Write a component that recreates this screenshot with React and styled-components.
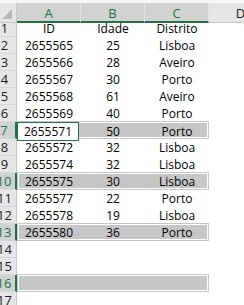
import React from "react";
import styled, { createGlobalStyle } from "styled-components";

const GREEN = "#217346";

const GlobalStyle = createGlobalStyle`
  html, body {
    margin: 0;
    padding: 0;
    background: #ffffff;
  }
  body {
    font-family: "Open Sans", "Liberation Sans", sans-serif;
  }
`;

const Viewport = styled.div`
  width: 244px;
  height: 305px;
  overflow: hidden;
  background: #ffffff;
`;

const TopStrip = styled.div`
  height: 3px;
  background: #f6f6f6;
`;

const Sheet = styled.div`
  display: grid;
  grid-template-columns: 24px 64px 64px 64px 64px;
  grid-auto-rows: 17px;
  margin-left: -7px;
  font-size: 12px;
  color: #000;
`;

const Corner = styled.div`
  height: 20px;
  background: #e6e6e6;
  border-right: 1px solid #c8c8c8;
  border-bottom: 1px solid #c8c8c8;
  box-sizing: border-box;
  position: relative;

  &::after {
    content: "";
    position: absolute;
    right: 4px;
    bottom: 3px;
    border-style: solid;
    border-width: 0 0 10px 10px;
    border-color: transparent transparent #b9b9b9 transparent;
  }
`;

const ColHeader = styled.div`
  height: 20px;
  box-sizing: border-box;
  display: flex;
  align-items: center;
  justify-content: center;
  background: ${(p) => (p.selected ? "#d2d2d2" : "#e6e6e6")};
  color: ${(p) => (p.selected ? GREEN : "#222")};
  border-right: 1px solid ${(p) => (p.selected ? "#e2e2e2" : "#c8c8c8")};
  border-bottom: ${(p) => (p.selected ? `2px solid ${GREEN}` : "1px solid #c8c8c8")};
  font-size: 13px;
  padding-top: 1px;
`;

const RowHeader = styled.div`
  box-sizing: border-box;
  display: flex;
  align-items: center;
  justify-content: center;
  background: ${(p) => (p.selected ? "#d2d2d2" : "#e6e6e6")};
  color: ${(p) => (p.selected ? GREEN : "#222")};
  border-right: ${(p) => (p.selected ? `2px solid ${GREEN}` : "1px solid #c8c8c8")};
  border-bottom: 1px solid #d6d6d6;
  font-size: 13px;
`;

const Cell = styled.div`
  display: flex;
  align-items: center;
  justify-content: center;
  box-sizing: border-box;
  white-space: nowrap;
`;

const Band = styled.div`
  grid-column: 2 / 5;
  display: grid;
  grid-template-columns: 64px 64px 64px;
  margin-top: -1px;
  height: 18px;
  background: #c6c6c6;
  box-shadow: inset 0 0 0 1px #c6c6c6, inset 0 0 0 2px #ffffff;
`;

const ActiveCell = styled(Cell)`
  background: #ffffff;
  border: 1px solid ${GREEN};
  margin: 1px 2px 0 0;
`;

const rows = [
  { n: 1, a: "ID", b: "Idade", c: "Distrito" },
  { n: 2, a: "2655565", b: "25", c: "Lisboa" },
  { n: 3, a: "2655566", b: "28", c: "Aveiro" },
  { n: 4, a: "2655567", b: "30", c: "Porto" },
  { n: 5, a: "2655568", b: "61", c: "Aveiro" },
  { n: 6, a: "2655569", b: "40", c: "Porto" },
  { n: 7, a: "2655571", b: "50", c: "Porto", sel: "active" },
  { n: 8, a: "2655572", b: "32", c: "Lisboa" },
  { n: 9, a: "2655574", b: "32", c: "Lisboa" },
  { n: 10, a: "2655575", b: "30", c: "Lisboa", sel: "band" },
  { n: 11, a: "2655577", b: "22", c: "Porto" },
  { n: 12, a: "2655578", b: "19", c: "Lisboa" },
  { n: 13, a: "2655580", b: "36", c: "Porto", sel: "band" },
  { n: 14 },
  { n: 15 },
  { n: 16, sel: "band" },
  { n: 17 },
];

function Row({ row }) {
  const selected = Boolean(row.sel);
  return (
    <>
      <RowHeader selected={selected}>{row.n}</RowHeader>
      {selected ? (
        <Band>
          {row.sel === "active" ? <ActiveCell>{row.a}</ActiveCell> : <Cell>{row.a}</Cell>}
          <Cell>{row.b}</Cell>
          <Cell>{row.c}</Cell>
        </Band>
      ) : (
        <>
          <Cell>{row.a}</Cell>
          <Cell>{row.b}</Cell>
          <Cell>{row.c}</Cell>
        </>
      )}
      <Cell />
    </>
  );
}

export default function App() {
  return (
    <Viewport>
      <GlobalStyle />
      <TopStrip />
      <Sheet>
        <Corner />
        <ColHeader selected>A</ColHeader>
        <ColHeader selected>B</ColHeader>
        <ColHeader selected>C</ColHeader>
        <ColHeader>D</ColHeader>
        {rows.map((row) => (
          <Row key={row.n} row={row} />
        ))}
      </Sheet>
    </Viewport>
  );
}
